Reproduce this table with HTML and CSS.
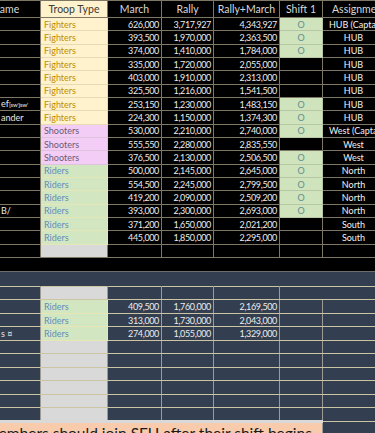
FILE: index.html
```html
<!DOCTYPE html>
<html>
<head>
<meta charset="utf-8">
<link rel="stylesheet" href="styles.css">
</head>
<body>
<div class="sheet">
  <table class="grid top">
    <colgroup>
      <col class="c-name"><col class="c-type"><col class="c-march"><col class="c-rally"><col class="c-rm"><col class="c-shift"><col class="c-assign">
    </colgroup>
    <thead>
      <tr>
        <th class="h-name">Name</th><th class="h-type">Troop Type</th><th>March</th><th>Rally</th><th>Rally+March</th><th>Shift 1</th><th class="h-assign">Assignment</th>
      </tr>
    </thead>
    <tbody>
      <tr><td></td><td class="fi">Fighters</td><td class="n">626,000</td><td class="n">3,717,927</td><td class="n">4,343,927</td><td class="on">O</td><td class="as cap">HUB (Captain)</td></tr>
      <tr><td></td><td class="fi">Fighters</td><td class="n">393,500</td><td class="n">1,970,000</td><td class="n">2,363,500</td><td class="on">O</td><td class="as">HUB</td></tr>
      <tr><td></td><td class="fi">Fighters</td><td class="n">374,000</td><td class="n">1,410,000</td><td class="n">1,784,000</td><td class="on">O</td><td class="as">HUB</td></tr>
      <tr><td></td><td class="fi">Fighters</td><td class="n">335,000</td><td class="n">1,720,000</td><td class="n">2,055,000</td><td></td><td class="as">HUB</td></tr>
      <tr><td></td><td class="fi">Fighters</td><td class="n">403,000</td><td class="n">1,910,000</td><td class="n">2,313,000</td><td></td><td class="as">HUB</td></tr>
      <tr><td></td><td class="fi">Fighters</td><td class="n">325,500</td><td class="n">1,216,000</td><td class="n">1,541,500</td><td></td><td class="as">HUB</td></tr>
      <tr><td class="nm">ef<span class="tiny">[sw'jsw'</span></td><td class="fi">Fighters</td><td class="n">253,150</td><td class="n">1,230,000</td><td class="n">1,483,150</td><td class="on">O</td><td class="as">HUB</td></tr>
      <tr><td class="nm">ander</td><td class="fi">Fighters</td><td class="n">224,300</td><td class="n">1,150,000</td><td class="n">1,374,300</td><td class="on">O</td><td class="as">HUB</td></tr>
      <tr><td></td><td class="sh">Shooters</td><td class="n">530,000</td><td class="n">2,210,000</td><td class="n">2,740,000</td><td class="on">O</td><td class="as cap">West (Captain)</td></tr>
      <tr><td></td><td class="sh">Shooters</td><td class="n">555,550</td><td class="n">2,280,000</td><td class="n">2,835,550</td><td></td><td class="as">West</td></tr>
      <tr><td></td><td class="sh">Shooters</td><td class="n">376,500</td><td class="n">2,130,000</td><td class="n">2,506,500</td><td class="on">O</td><td class="as">West</td></tr>
      <tr><td></td><td class="ri">Riders</td><td class="n">500,000</td><td class="n">2,145,000</td><td class="n">2,645,000</td><td class="on">O</td><td class="as">North</td></tr>
      <tr><td></td><td class="ri">Riders</td><td class="n">554,500</td><td class="n">2,245,000</td><td class="n">2,799,500</td><td class="on">O</td><td class="as">North</td></tr>
      <tr><td></td><td class="ri">Riders</td><td class="n">419,200</td><td class="n">2,090,000</td><td class="n">2,509,200</td><td class="on">O</td><td class="as">North</td></tr>
      <tr><td class="nm">B/</td><td class="ri">Riders</td><td class="n">393,000</td><td class="n">2,300,000</td><td class="n">2,693,000</td><td class="on">O</td><td class="as">North</td></tr>
      <tr><td></td><td class="ri">Riders</td><td class="n">371,200</td><td class="n">1,650,000</td><td class="n">2,021,200</td><td></td><td class="as">South</td></tr>
      <tr><td></td><td class="ri">Riders</td><td class="n">445,000</td><td class="n">1,850,000</td><td class="n">2,295,000</td><td></td><td class="as">South</td></tr>
      <tr><td></td><td class="gr"></td><td></td><td></td><td></td><td></td><td></td></tr>
    </tbody>
  </table>
  <div class="gap"></div>
  <div class="lower">
    <div class="band"></div>
    <table class="grid bottom">
      <colgroup>
        <col class="c-name"><col class="c-type"><col class="c-march"><col class="c-rally"><col class="c-rm"><col class="c-shift"><col class="c-assign">
      </colgroup>
      <tbody>
        <tr><td></td><td class="gr"></td><td></td><td></td><td></td><td colspan="2"></td></tr>
        <tr><td></td><td class="ri">Riders</td><td class="n">409,500</td><td class="n">1,760,000</td><td class="n">2,169,500</td><td></td><td></td></tr>
        <tr><td></td><td class="ri">Riders</td><td class="n">313,000</td><td class="n">1,730,000</td><td class="n">2,043,000</td><td></td><td></td></tr>
        <tr><td class="nm">s ¤</td><td class="ri">Riders</td><td class="n">274,000</td><td class="n">1,055,000</td><td class="n">1,329,000</td><td></td><td></td></tr>
        <tr><td></td><td class="gr"></td><td></td><td></td><td></td><td></td><td></td></tr>
        <tr><td></td><td class="gr"></td><td></td><td></td><td></td><td></td><td></td></tr>
        <tr><td></td><td class="gr"></td><td></td><td></td><td></td><td></td><td></td></tr>
        <tr><td></td><td class="gr"></td><td></td><td></td><td></td><td></td><td></td></tr>
        <tr><td></td><td class="gr"></td><td></td><td></td><td></td><td></td><td></td></tr>
        <tr><td></td><td class="gr"></td><td></td><td></td><td></td><td></td><td></td></tr>
        <tr class="note-row"><td colspan="6" class="note">Members should join SFU after their shift begins</td><td></td></tr>
      </tbody>
    </table>
  </div>
</div>
</body>
</html>
```

FILE: styles.css
```css
html, body {
  margin: 0;
  padding: 0;
  background: #000;
}

.sheet {
  width: 375px;
  height: 433px;
  overflow: hidden;
  background: #000;
  font-family: Lato, "Open Sans", sans-serif;
}

table.grid {
  border-collapse: collapse;
  table-layout: fixed;
  width: 404px;
  margin-left: -20px;
}

.c-name { width: 60px; }
.c-type { width: 67px; }
.c-march { width: 54px; }
.c-rally { width: 52px; }
.c-rm { width: 66px; }
.c-shift { width: 43px; }
.c-assign { width: 62px; }

.grid th,
.grid td {
  padding: 0 3px;
  white-space: nowrap;
  overflow: hidden;
  font-size: 9px;
  line-height: 11px;
  color: #ececec;
  vertical-align: middle;
}

.top th,
.top td {
  border: 1px solid #7d7764;
}

.top thead tr { height: 17px; }
.top tbody tr { height: 13.33px; }

.top th {
  font-weight: normal;
  font-size: 10.5px;
  color: #d8d8d8;
  text-align: center;
}

.top th.h-name {
  text-align: left;
  padding-left: 11px;
}

.top th.h-assign {
  text-align: left;
  padding-left: 9px;
}

.top th.h-type {
  background: #fff2cc;
  color: #3b3b3b;
}

.grid td.n {
  text-align: right;
  letter-spacing: -0.35px;
  padding-right: 2px;
}

.grid td.fi {
  background: #fff2cc;
  color: #bf8f00;
  border-color: #e6dbb4;
}

.grid td.sh {
  background: #f3cdf6;
  color: #6a5c72;
  border-color: #dcc4de;
}

.grid td.ri {
  background: #d3e6c2;
  color: #5d8fbd;
  border-color: #e4e7b8;
}

.grid td.gr {
  background: #d9d9d9;
}

.grid td.on {
  background: #cfe3bd;
  color: #5f9090;
  text-align: center;
  border-color: #b7c7a5;
}

.grid td.as {
  text-align: center;
  color: #f2f2f2;
}

.grid td.as.cap {
  text-align: left;
  padding-left: 6px;
}

.grid td.nm {
  text-align: left;
  padding-left: 20px;
  color: #e6e6e6;
}

.tiny {
  font-size: 6px;
  letter-spacing: -0.1px;
}

.gap {
  height: 13px;
  background: #000;
}

.lower {
  background: #333f50;
  border-top: 1px solid #6e6e6e;
}

.band {
  height: 14px;
}

.bottom td {
  border-top: 1px solid #cbc5a4;
  border-bottom: 1px solid #cbc5a4;
  border-left: 1px solid #9c9c94;
  border-right: 1px solid #9c9c94;
}

.bottom tr { height: 13.5px; }

.bottom td.ri {
  border-color: #e8e6b4;
}

.note-row { height: 16px; }

.bottom td.note {
  background: #f8cbad;
  color: #1a1a1a;
  font-size: 15.5px;
  line-height: 16px;
  vertical-align: top;
  padding: 2px 0 0 4px;
  border: none;
  border-top: 3px solid #d9d9d9;
}
```
